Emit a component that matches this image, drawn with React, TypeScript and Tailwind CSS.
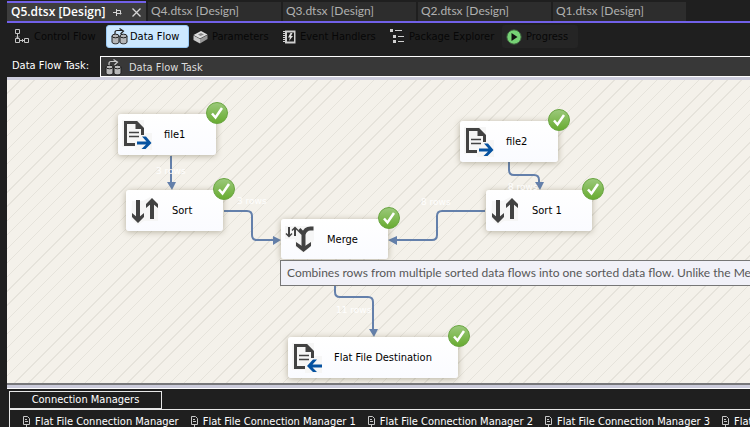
import React from "react";

const tahoma = "font-['DejaVu_Sans_Condensed','DejaVu_Sans',sans-serif]";
const tabFont = "font-['Lato','Noto_Sans',sans-serif]";

function CylindersIcon({ dark }: { dark?: boolean }) {
  const line = dark ? "#1f1f1f" : "#222";
  const fill = dark ? "#b9b9b9" : "#b4b6b8";
  const arrow = dark ? "#c8c8c8" : line;
  return (
    <svg width="17" height="17" viewBox="0 0 17 17" className="shrink-0">
      {[1, 9].map((x) => (
        <g key={x} fill={fill} stroke={line} strokeWidth="1">
          <path d={`M${x} 8v6c0 2.4 7 2.4 7 0V8`} />
          <ellipse cx={x + 3.5} cy="8" rx="3.5" ry="1.8" />
        </g>
      ))}
      <path d="M4 6V4.500C4 3 5 2.500 6 2.500h6" fill="none" stroke={arrow} strokeWidth="1.200" />
      <path d="M8.500 0.500l4 2.500-3 3" fill="none" stroke={arrow} strokeWidth="1.200" />
    </svg>
  );
}

function ControlFlowIcon() {
  return (
    <svg width="15" height="15" viewBox="0 0 15 15" fill="none" stroke="#c4c4c4" className="shrink-0">
      <path d="M.5.5h4v4h-4zM.5 9.500h4v4h-4zM9.500 9.500h4v4h-4zM2.500 5v4M5 11.500h4M1 7.500l1.500 1.500L4 7.500M7 10l1.500 1.500L7 13" />
    </svg>
  );
}

function BoxIcon() {
  return (
    <svg width="15" height="14" viewBox="0 0 15 14" className="shrink-0">
      <path d="M.5 5.500 7 9v4.500L.5 10z" fill="#c9c9c9" />
      <path d="M14.500 5 7 9v4.500L14.500 9z" fill="#989898" />
      <path d="M.5 5 8 1l6.500 3.500L7 8.500z" fill="#dedede" />
      <path d="M5 4.500 8 3l3 1.500L7.500 6z" fill="#8a8a8a" />
    </svg>
  );
}

function EventIcon() {
  return (
    <svg width="13" height="14" viewBox="0 0 13 14" className="shrink-0">
      <path d="M2 .5h10.500v13H2z" fill="#cfcfcf" />
      <path d="M0 1.500h2M0 3.500h2M0 5.500h2M0 7.500h2M0 9.500h2M0 11.500h2" stroke="#cfcfcf" />
      <path d="M4 2.500h7v9H4z" fill="#1f1f1f" />
      <path d="M7.500 3 5 7.500h2L6 11l4-5H8l1.500-3z" fill="#e0e0e0" />
    </svg>
  );
}

function ExplorerIcon() {
  return (
    <svg width="15" height="15" viewBox="0 0 15 15" fill="#d0d0d0" className="shrink-0">
      <path d="M0 0h3v3H0zM3 6h3v3H3zM3 11h3v3H3zM5 1h7v1H5zM8 7h6v1H8zM8 12h6v1H8z" />
    </svg>
  );
}

function ProgressIcon() {
  return (
    <svg width="16" height="16" viewBox="0 0 16 16" className="shrink-0">
      <circle cx="8" cy="8" r="7.200" fill="#76d275" stroke="#3c5a3c" />
      <path d="M5.500 4v8l6-4z" fill="#111" />
    </svg>
  );
}

function FileIcon({ output }: { output?: boolean }) {
  return (
    <svg width="30" height="30" viewBox="0 0 30 30">
      <path d="M0 0h22v13h8v17H13v-3H0z" fill="#f6f6f6" />
      <path d="M13 24.500H3.500v-22h11l6 6V15" fill="none" stroke="#424242" strokeWidth="3" />
      <path d="M13.500 2v7h7.500" fill="#424242" />
      <path d="M7 12.500h10M7 16.500h10" stroke="#424242" strokeWidth="1.500" />
      {output ? (
        <path d="M30 21.500H20.500l4.500-5h-4L15 23l6 6h4l-4.500-4.500H30z" fill="#0652a0" />
      ) : (
        <path d="M15 21.500h9.500L20 16.500h4L29.500 23l-6 6h-4l4.500-4.500H15z" fill="#0652a0" />
      )}
    </svg>
  );
}

function SortIcon() {
  return (
    <svg width="30" height="28" viewBox="0 0 30 28">
      <path d="M2 4h11l7-4 8 6v18H14l-6 4-7-6z" fill="#f6f6f6" />
      <path d="M8 3v18M22 22V6" stroke="#424242" strokeWidth="4" />
      <path d="M2 16v4l6 6 6-6v-4l-6 5zM16 11V7l6-6 6 6v4l-6-5z" fill="#424242" />
    </svg>
  );
}

function MergeIcon() {
  return (
    <svg width="30" height="28" viewBox="0 0 30 28">
      <path d="M0 1h29v14l-4 8-7 5-8-6V14H0z" fill="#f6f6f6" />
      <path d="M4 2v9M10 11V3" stroke="#424242" strokeWidth="2" />
      <path d="M1 8.500 4 11.500l3-3M7 5.500l3-3 3 3" fill="none" stroke="#424242" strokeWidth="1.500" />
      <path d="M14 4.500 18.500 9v14M28.500 3.500h-3c-4 0-6 2.500-7 6" fill="none" stroke="#424242" strokeWidth="4" />
      <path d="M11 17v4l7.500 6 7.500-6v-4l-7.500 5z" fill="#424242" />
    </svg>
  );
}

function Check() {
  return (
    <svg width="22" height="22" viewBox="0 0 22 22" className="absolute -right-3 -top-3">
      <defs>
        <linearGradient id="ok" x1="0" y1="0" x2="0" y2="1">
          <stop offset="0" stopColor="#9cc97c" />
          <stop offset="1" stopColor="#67ab2f" />
        </linearGradient>
      </defs>
      <circle cx="11" cy="11" r="10.500" fill="url(#ok)" stroke="#6aa542" />
      <path d="M6 11.500 9.500 15.500 16 6" fill="none" stroke="#fff" strokeWidth="2.500" />
    </svg>
  );
}

function Node({ place, label, icon }: { place: string; label: string; icon: React.ReactNode }) {
  return (
    <div className={`absolute flex items-center rounded-[3px] bg-gradient-to-b from-white to-[#fafbff] pl-1 text-[11px] text-black shadow-[0_1px_6px_rgba(90,80,50,0.4)] ${place}`}>
      <span className="flex w-[30px] justify-center">{icon}</span>
      <span className="ml-3 whitespace-nowrap pt-0.5">{label}</span>
      <Check />
    </div>
  );
}

function Rows({ place, children }: { place: string; children: React.ReactNode }) {
  return <span className={`absolute whitespace-nowrap font-['DejaVu_Sans',sans-serif] text-[9px] leading-3 text-white/90 ${place}`}>{children}</span>;
}

function PinDocIcon() {
  return (
    <svg width="9" height="13" viewBox="0 0 9 13" fill="none" stroke="#c8c8c8" className="shrink-0">
      <path d="M1.500.5h4l2 2v6h-6zM4.500 8.500V13M3 3.500h2M3 5.500h3" />
    </svg>
  );
}

const tabs = ["Q4.dtsx [Design]", "Q3.dtsx [Design]", "Q2.dtsx [Design]", "Q1.dtsx [Design]"];
const managers = ["Flat File Connection Manager", "Flat File Connection Manager 1", "Flat File Connection Manager 2", "Flat File Connection Manager 3", "Flat File Connection Manager 4"];

const views = [
  { label: "Control Flow", icon: <ControlFlowIcon />, style: "w-[99px] gap-1 pl-2" },
  { label: "Data Flow", icon: <CylindersIcon />, style: "w-[83px] gap-0.5 rounded-[3px] border border-[#99c9f5] bg-[#cce8ff] pl-1 text-black" },
  { label: "Parameters", icon: <BoxIcon />, style: "w-[90px] gap-1 pl-1" },
  { label: "Event Handlers", icon: <EventIcon />, style: "w-[107px] gap-1 pl-1" },
  { label: "Package Explorer", icon: <ExplorerIcon />, style: "w-[116px] gap-1 pl-1" },
  { label: "Progress", icon: <ProgressIcon />, style: "w-[76px] gap-1 rounded-[3px] bg-[#252525] pl-1" },
];

export default function App() {
  return (
    <div className={`flex h-screen flex-col overflow-hidden bg-[#1f1f1f] pl-[7px] ${tahoma}`}>
      <header className={`flex h-[23px] shrink-0 gap-0.5 border-b-2 border-[#7160e8] text-xs ${tabFont}`}>
        <div className="mt-px flex w-[139px] shrink-0 items-center gap-2.5 border-t-2 border-[#7160e8] bg-[#3d3d3d] pl-1">
          <button className="w-[92px] whitespace-nowrap text-left font-['Open_Sans','Noto_Sans',sans-serif] font-semibold text-white">Q5.dtsx [Design]</button>
          <button aria-label="Pin">
            <svg width="9" height="7" viewBox="0 0 9 7" fill="none" stroke="#d6d6d6"><path d="M0 3.500h3M3.500 0v7M3.500 1.500h4v4M3.500 4.500h5" /></svg>
          </button>
          <button aria-label="Close">
            <svg width="9" height="9" viewBox="0 0 9 9" stroke="#d6d6d6" strokeWidth="1.300"><path d="M.5.5l8 8M8.500.5l-8 8" /></svg>
          </button>
        </div>
        {tabs.map((t) => (
          <button key={t} className="mt-0.5 w-[133px] shrink-0 whitespace-nowrap bg-[#2d2d2d] pb-0.5 pl-[3px] text-left text-[#b0b0b0]">{t}</button>
        ))}
      </header>

      <nav className="flex h-[33px] shrink-0 items-start pt-0.5 text-[11px] text-[#070707]">
        {views.map((v) => (
          <button key={v.label} className={`flex h-[23px] shrink-0 items-center whitespace-nowrap ${v.style}`}>
            {v.icon}
            <span className="pt-0.5">{v.label}</span>
          </button>
        ))}
      </nav>

      <div className="flex h-[21px] shrink-0 text-[11px]">
        <label htmlFor="task" className="w-[93px] shrink-0 whitespace-nowrap pl-[5px] pt-0.5 text-white">Data Flow Task:</label>
        <div className="flex grow items-center gap-[7px] border-y border-l border-white bg-[#383838] pl-1 pt-0.5">
          <CylindersIcon dark />
          <select id="task" className="grow appearance-none bg-transparent pt-0.5 text-[#dcdcdc] outline-none">
            <option>Data Flow Task</option>
          </select>
        </div>
      </div>

      <main className="relative min-h-0 grow overflow-hidden border-b-2 border-t-[3px] border-b-[#77777a] border-t-[#ccccdc] bg-[#f4f1ea] bg-[repeating-linear-gradient(135deg,transparent_0px,transparent_9px,#e6e3db_9px,#e6e3db_10px)]">
        <svg width="640" height="303" className="absolute left-0 top-0" fill="none" stroke="#6480ab" strokeWidth="2">
          <path d="M164 76v28M217 131h23q5 0 5 5v19q0 5 5 5h17M502 82v8q0 5 5 5h20q5 0 5 5v6M478 131h-43q-5 0-5 5v19q0 5-5 5h-35M328 205v7q0 5 5 5h28q5 0 5 5v30" />
          <path stroke="none" fill="#6480ab" d="M160 102h9l-4 8zM266 156v9l8-5zM528 102h9l-4 8zM390 156v9l-9-5zM362 249h9l-4 8z" />
        </svg>
        <Node place="left-[111px] top-[34px] h-[41px] w-[98px]" label="file1" icon={<FileIcon />} />
        <Node place="left-[453px] top-[41px] h-[41px] w-[98px]" label="file2" icon={<FileIcon />} />
        <Node place="left-[119px] top-[110px] h-[41px] w-[97px]" label="Sort" icon={<SortIcon />} />
        <Node place="left-[479px] top-[110px] h-[41px] w-[106px]" label="Sort 1" icon={<SortIcon />} />
        <Node place="left-[274px] top-[139px] h-[40px] w-[107px]" label="Merge" icon={<MergeIcon />} />
        <Node place="left-[281px] top-[257px] h-[41px] w-[170px]" label="Flat File Destination" icon={<FileIcon output />} />
        <Rows place="left-[149px] top-[85px]">3 rows</Rows>
        <Rows place="left-[230px] top-[115px]">3 rows</Rows>
        <Rows place="left-[501px] top-[101px]">8 rows</Rows>
        <Rows place="left-[414px] top-[116px]">8 rows</Rows>
        <Rows place="left-[329px] top-[224px]">11 rows</Rows>
        <div role="tooltip" className={`absolute left-[273px] right-0 top-[180px] h-[26px] overflow-hidden whitespace-nowrap border border-r-0 border-[#767676] bg-[#f1f1f8] pl-1.5 text-xs leading-6 text-[#575757] ${tabFont}`}>
          Combines rows from multiple sorted data flows into one sorted data flow. Unlike the Me
        </div>
      </main>

      <footer className="h-[42px] shrink-0 overflow-hidden border-t-[3px] border-[#ccccdc] text-[11px] text-white">
        <div className="border-t border-white pl-0.5 pt-0.5">
          <button className="block h-[18px] w-[153px] border border-[#e8e8e8] text-center leading-4">Connection Managers</button>
          <ul className="flex h-[30px] gap-[11px] border-l border-t border-[#e8e8e8] pl-3 pt-1.5">
            {managers.map((m) => (
              <li key={m} className="flex shrink-0 items-start gap-1 whitespace-nowrap leading-3"><PinDocIcon />{m}</li>
            ))}
          </ul>
        </div>
      </footer>
    </div>
  );
}
